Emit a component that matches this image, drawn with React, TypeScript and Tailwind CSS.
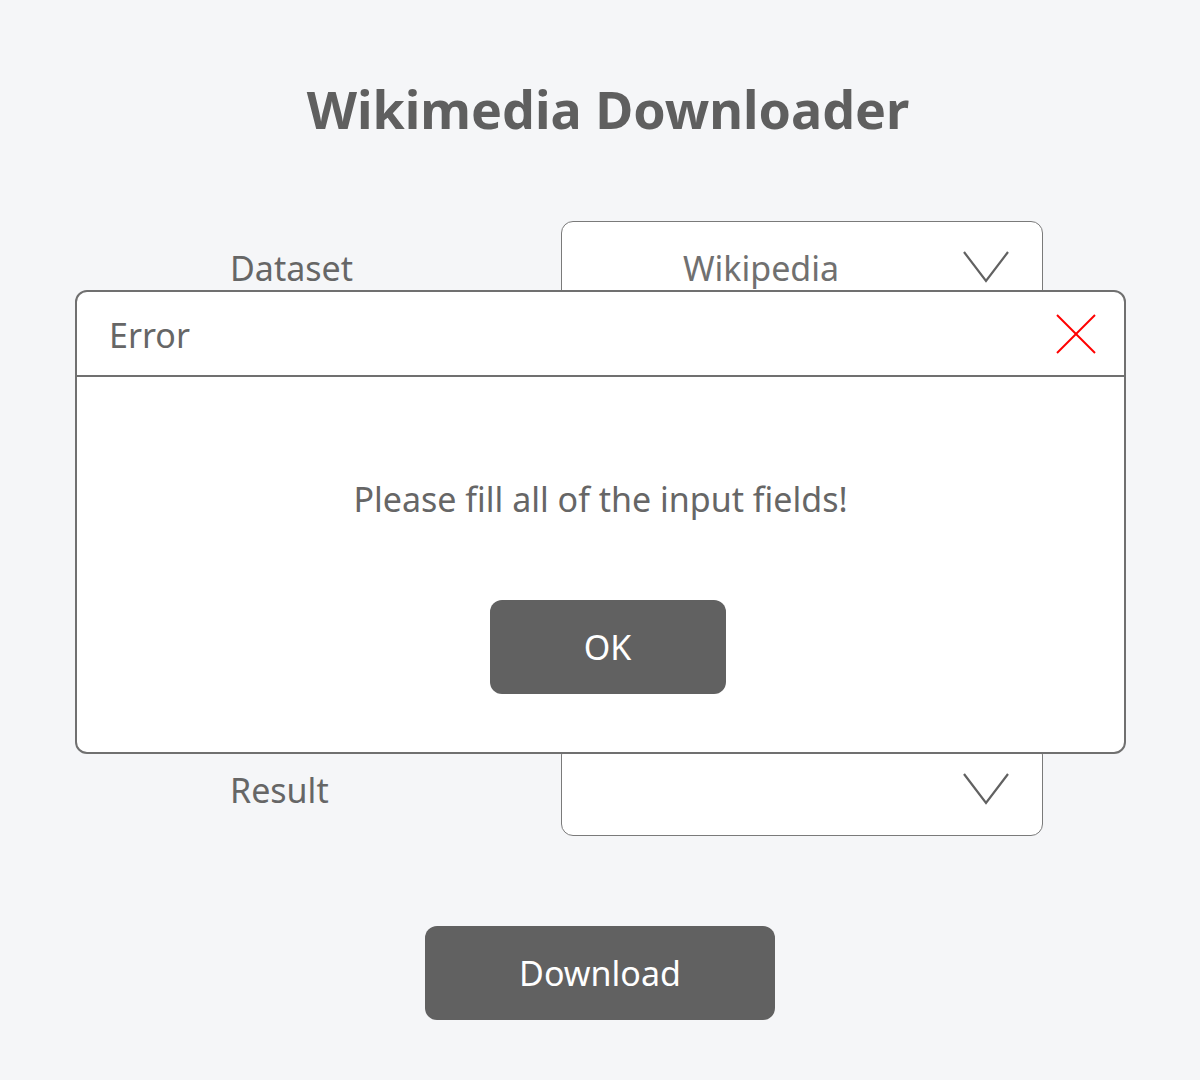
function Chevron() {
  return (
    <svg width="48" height="34" viewBox="0 0 48 34" fill="none" className="shrink-0">
      <polyline points="2,2 24,31 46,2" stroke="#616161" strokeWidth="2.2" />
    </svg>
  )
}

function Row({ label, value }: { label: string; value?: string }) {
  return (
    <div className="flex items-center">
      <div className="w-[561px] shrink-0 pl-[230px] text-[34px] text-[#666666] leading-none">{label}</div>
      <div className="relative w-[482px] h-[93px] shrink-0 bg-white border border-[#7a7a7a] rounded-xl flex items-center justify-center pr-[82px]">
        <span className="text-[34px] text-[#707070] leading-none">{value}</span>
        <div className="absolute right-[32px] top-[28px]">
          <Chevron />
        </div>
      </div>
    </div>
  )
}

export default function App() {
  return (
    <div
      className="relative w-[1200px] h-[1080px] bg-[#f5f6f8] overflow-hidden"
      style={{ fontFamily: '"Noto Sans", "Open Sans", sans-serif' }}
    >
      <h1 className="pt-[83px] pl-[16px] text-center text-[52px] font-bold text-[#5f5f5f] leading-none">
        Wikimedia Downloader
      </h1>

      <div className="mt-[86px] flex flex-col gap-[81px]">
        <Row label="Dataset" value="Wikipedia" />
        <Row label="Language" value="English" />
        <Row label="Date" value="" />
        <Row label="Result" />
      </div>

      <div className="mt-[90px] flex justify-center">
        <button className="w-[350px] h-[94px] rounded-xl bg-[#616161] text-white text-[34px] leading-none">
          Download
        </button>
      </div>

      {/* Error dialog */}
      <div className="absolute left-[75px] top-[290px] w-[1051px] h-[464px] bg-white border-2 border-[#707070] rounded-xl flex flex-col">
        <div className="h-[85px] border-b-2 border-[#707070] flex items-center justify-between pl-[32px] pr-[28px]">
          <span className="text-[34px] text-[#666666] leading-none mt-[3px]">Error</span>
          <svg width="40" height="40" viewBox="0 0 40 40" fill="none">
            <line x1="1" y1="1" x2="39" y2="39" stroke="#ff0000" strokeWidth="2" />
            <line x1="39" y1="1" x2="1" y2="39" stroke="#ff0000" strokeWidth="2" />
          </svg>
        </div>
        <div className="flex-1 flex flex-col items-center pt-[105px]">
          <p className="text-[34px] text-[#666666] leading-none">Please fill all of the input fields!</p>
          <button className="mt-[84px] ml-[14px] w-[236px] h-[94px] rounded-xl bg-[#616161] text-white text-[34px] leading-none">
            OK
          </button>
        </div>
      </div>
    </div>
  )
}
